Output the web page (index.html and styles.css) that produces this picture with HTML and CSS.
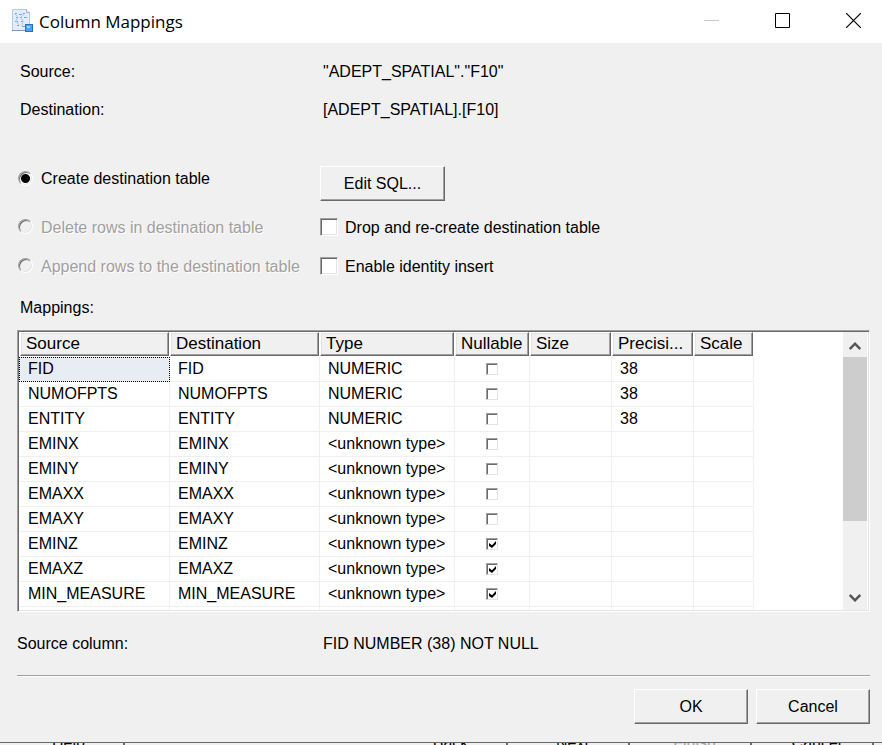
FILE: index.html
```html
<!DOCTYPE html>
<html lang="en">
<head>
<meta charset="utf-8">
<title>Column Mappings</title>
<link rel="stylesheet" href="styles.css">
</head>
<body>
<main class="dialog">
  <header class="titlebar">
    <svg class="app-icon" width="24" height="26" viewBox="0 0 24 26" aria-hidden="true">
      <path d="M2.500 1.500h14l3 3v18h-17z" fill="#e3edfa" stroke="#b4cbe9"/>
      <path d="M16.500 1.500v3h3" fill="#fff" stroke="#8fb0de"/>
      <path d="M2 22.500h17" stroke="#7f96b8"/>
      <path d="M5 5.500h2M9 6.500h3M13 5.500h2M6 9.500h2M10 9.500h2M14 9.500h3M5 13.500h3M11 13.500h2M7 17.500h2M12 18.500h3" fill="none" stroke="#7fa4dc"/>
      <path d="M5 6l3 3-2 4 3 4M14 6l-3 3 2 4-1 5" fill="none" stroke="#a9c5ec"/>
      <rect x="15.500" y="16.500" width="7" height="7" fill="#4fa3ea" stroke="#2470c2"/>
      <path d="M17 18h3v2h-3z" fill="#9ad3fa"/>
    </svg>
    <h1 class="title">Column Mappings</h1>
    <div class="window-buttons">
      <button class="window-button" aria-label="Minimize" disabled><svg width="15" height="15" viewBox="0 0 15 15"><path d="M0 7.500h15" stroke="#c8c8c8"/></svg></button>
      <button class="window-button" aria-label="Maximize"><svg width="15" height="15" viewBox="0 0 15 15"><path d="M.5.5h14v14h-14z" fill="none" stroke="#000"/></svg></button>
      <button class="window-button" aria-label="Close"><svg width="15" height="15" viewBox="0 0 15 15"><path d="M0 0l15 15M15 0L0 15" stroke="#000" stroke-width="1.200"/></svg></button>
    </div>
  </header>

  <div class="content">
    <dl class="info">
      <dt>Source:</dt><dd>"ADEPT_SPATIAL"."F10"</dd>
      <dt>Destination:</dt><dd>[ADEPT_SPATIAL].[F10]</dd>
    </dl>

    <form class="options">
      <label class="option first"><input class="radio" type="radio" name="mode" checked>Create destination table</label>
      <div><button class="button edit" type="button">Edit SQL...</button></div>
      <label class="option off"><input class="radio" type="radio" name="mode" disabled>Delete rows in destination table</label>
      <label class="option check-option"><input class="check" type="checkbox">Drop and re-create destination table</label>
      <label class="option off"><input class="radio" type="radio" name="mode" disabled>Append rows to the destination table</label>
      <label class="option check-option"><input class="check" type="checkbox">Enable identity insert</label>
    </form>

    <h2 class="caption" id="mappings">Mappings:</h2>
    <div class="grid-box">
      <div class="grid-view">
        <table class="grid" aria-labelledby="mappings">
          <colgroup><col class="c-source"><col class="c-dest"><col class="c-type"><col class="c-null"><col class="c-num"><col class="c-num"><col class="c-scale"></colgroup>
          <thead>
            <tr><th><div>Source</div></th><th><div>Destination</div></th><th><div>Type</div></th><th><div>Nullable</div></th><th><div>Size</div></th><th><div>Precisi...</div></th><th><div>Scale</div></th></tr>
          </thead>
          <tbody>
            <tr><td class="focused">FID</td><td>FID</td><td>NUMERIC</td><td><input class="tick" type="checkbox" aria-label="FID nullable"></td><td></td><td>38</td><td></td></tr>
            <tr><td>NUMOFPTS</td><td>NUMOFPTS</td><td>NUMERIC</td><td><input class="tick" type="checkbox" aria-label="NUMOFPTS nullable"></td><td></td><td>38</td><td></td></tr>
            <tr><td>ENTITY</td><td>ENTITY</td><td>NUMERIC</td><td><input class="tick" type="checkbox" aria-label="ENTITY nullable"></td><td></td><td>38</td><td></td></tr>
            <tr><td>EMINX</td><td>EMINX</td><td>&lt;unknown type&gt;</td><td><input class="tick" type="checkbox" aria-label="EMINX nullable"></td><td></td><td></td><td></td></tr>
            <tr><td>EMINY</td><td>EMINY</td><td>&lt;unknown type&gt;</td><td><input class="tick" type="checkbox" aria-label="EMINY nullable"></td><td></td><td></td><td></td></tr>
            <tr><td>EMAXX</td><td>EMAXX</td><td>&lt;unknown type&gt;</td><td><input class="tick" type="checkbox" aria-label="EMAXX nullable"></td><td></td><td></td><td></td></tr>
            <tr><td>EMAXY</td><td>EMAXY</td><td>&lt;unknown type&gt;</td><td><input class="tick" type="checkbox" aria-label="EMAXY nullable"></td><td></td><td></td><td></td></tr>
            <tr><td>EMINZ</td><td>EMINZ</td><td>&lt;unknown type&gt;</td><td><input class="tick" type="checkbox" aria-label="EMINZ nullable" checked></td><td></td><td></td><td></td></tr>
            <tr><td>EMAXZ</td><td>EMAXZ</td><td>&lt;unknown type&gt;</td><td><input class="tick" type="checkbox" aria-label="EMAXZ nullable" checked></td><td></td><td></td><td></td></tr>
            <tr><td>MIN_MEASURE</td><td>MIN_MEASURE</td><td>&lt;unknown type&gt;</td><td><input class="tick" type="checkbox" aria-label="MIN_MEASURE nullable" checked></td><td></td><td></td><td></td></tr>
            <tr><td></td><td></td><td></td><td></td><td></td><td></td><td></td></tr>
          </tbody>
        </table>
      </div>
      <div class="scrollbar">
        <button class="scroll-button" aria-label="Scroll up"><svg width="12" height="10" viewBox="0 0 12 10"><path d="M.7 8L6 2.700 11.300 8" fill="none" stroke="#555" stroke-width="2.500"/></svg></button>
        <div class="track"><div class="thumb"></div></div>
        <button class="scroll-button" aria-label="Scroll down"><svg width="12" height="10" viewBox="0 0 12 10"><path d="M.7 1L6 6.300 11.300 1" fill="none" stroke="#555" stroke-width="2.500"/></svg></button>
      </div>
    </div>

    <div class="source-column"><span>Source column:</span><span>FID NUMBER (38) NOT NULL</span></div>
    <hr class="divider">
    <div class="actions"><button class="button">OK</button><button class="button">Cancel</button></div>
  </div>
</main>

<footer class="wizard">
  <button class="wizard-button help">Help</button>
  <button class="wizard-button">Back</button>
  <button class="wizard-button">Next</button>
  <button class="wizard-button" disabled>Finish</button>
  <button class="wizard-button">Cancel</button>
</footer>
</body>
</html>
```

FILE: styles.css
```css
* { box-sizing: border-box; }

body {
  margin: 0;
  height: 100vh;
  display: flex;
  flex-direction: column;
  overflow: hidden;
  background: #f0f0f0;
  color: #000;
  font: 16px/24px "Liberation Sans", Arial, sans-serif;
}

button, input { font: inherit; color: inherit; margin: 0; }

.dialog {
  flex: 1;
  min-height: 0;
  display: flex;
  flex-direction: column;
  border-bottom: 1px solid #696969;
}

/* Title bar */
.titlebar {
  display: flex;
  align-items: center;
  height: 43px;
  padding-left: 10px;
  background: #fff;
}
.app-icon { margin-bottom: 2px; }
.title {
  flex: 1;
  margin: 0 0 0 5px;
  font: 17px/24px "Open Sans", "Noto Sans", sans-serif;
}
.window-buttons {
  display: flex;
  align-self: flex-start;
  margin-right: -7px;
}
.window-button {
  display: flex;
  align-items: center;
  justify-content: center;
  width: 71px;
  height: 41px;
  padding: 0;
  border: 0;
  background: none;
}

/* Dialog content */
.content {
  flex: 1;
  min-height: 0;
  display: flex;
  flex-direction: column;
  padding: 10px 12px 18px 17px;
}
.info {
  display: grid;
  grid-template-columns: 303px 1fr;
  margin: 0 0 37px;
  padding-left: 3px;
  line-height: 38px;
}
.info dd { margin: 0; }

.options {
  display: grid;
  grid-template-columns: 302px 1fr;
  grid-template-rows: 42px 39px 39px;
  padding-left: 1px;
}
.option { display: flex; align-items: center; gap: 8px; }
.option.first { align-self: start; line-height: 26px; }
.check-option { gap: 7px; }
.off { color: #a0a0a0; text-shadow: 1px 1px #fff; }

.radio {
  appearance: none;
  width: 15px;
  height: 15px;
  margin-bottom: 2px;
  border: 1px solid;
  border-color: #a0a0a0 #fff #fff #a0a0a0;
  border-radius: 50%;
  background: #f0f0f0;
  box-shadow: inset 1px 1px #696969, inset -1px -1px #e3e3e3;
}
.radio:checked { background: radial-gradient(circle, #000 4px, #fff 5px); }

.check {
  appearance: none;
  width: 18px;
  height: 18px;
  margin-bottom: 2px;
  border: 1px solid;
  border-color: #a0a0a0 #fff #fff #a0a0a0;
  background: #fff;
  box-shadow: inset 1px 1px #696969, inset -1px -1px #e3e3e3;
}

.button {
  width: 114px;
  height: 35px;
  padding: 0;
  border: 1px solid;
  border-color: #fff #696969 #696969 #fff;
  background: #f0f0f0;
  box-shadow: inset -1px -1px #a0a0a0;
}
.edit { width: 125px; }

.caption {
  margin: 0;
  padding: 0 3px;
  font: inherit;
  line-height: 44px;
}

/* Mappings grid */
.grid-box {
  flex: 1;
  min-height: 0;
  display: flex;
  padding: 1px 2px 1px 1px;
  border: 1px solid;
  border-color: #a0a0a0 #fff #fff #a0a0a0;
  background: #fff;
  box-shadow: inset 1px 1px #696969, inset -1px -1px #e3e3e3;
}
.grid-view { flex: 1; overflow: hidden; }
.grid {
  table-layout: fixed;
  width: 735px;
  border-collapse: separate;
  border-spacing: 0;
}
.c-source { width: 151px; }
.c-dest { width: 150px; }
.c-type { width: 135px; }
.c-null { width: 75px; }
.c-num { width: 82px; }
.c-scale { width: 60px; }

.grid th {
  height: 25px;
  padding: 0 1px 1px 0;
  font-size: 17px;
  font-weight: normal;
  text-align: left;
}
.grid th:first-child { padding-left: 1px; }
.grid th div {
  height: 24px;
  padding-left: 5px;
  line-height: 22px;
  overflow: hidden;
  white-space: nowrap;
  border: 1px solid;
  border-color: #fff #696969 #696969 #fff;
  background: #f0f0f0;
  box-shadow: inset -1px -1px #a0a0a0, inset 1px 1px #e3e3e3;
}
.grid td {
  height: 25px;
  padding: 0 0 0 8px;
  line-height: 24px;
  white-space: nowrap;
  border: solid #f0f0f0;
  border-width: 0 1px 1px 0;
}
.grid td:first-child { padding-left: 9px; }
.grid .focused {
  background: #e8edf3;
  outline: 1px dotted #000;
  outline-offset: -1px;
}
.grid td:nth-child(4) { padding: 0; text-align: center; }

.tick {
  appearance: none;
  display: block;
  width: 12px;
  height: 12px;
  margin: 0 auto;
  border: 1px solid;
  border-color: #a0a0a0 #e3e3e3 #e3e3e3 #a0a0a0;
  background: #fff;
  box-shadow: inset 1px 1px #696969;
}
.tick:checked::before {
  content: "";
  display: block;
  width: 7px;
  height: 7px;
  margin: 2px;
  background: #000;
  clip-path: polygon(0 29%, 43% 62%, 100% 0, 100% 43%, 43% 100%, 0 71%);
}

.scrollbar {
  display: flex;
  flex-direction: column;
  width: 24px;
  background: #f0f0f0;
}
.scroll-button {
  display: flex;
  align-items: center;
  justify-content: center;
  height: 25px;
  padding: 2px 0 0;
  border: 0;
  background: none;
}
.track { flex: 1; }
.thumb { height: 72%; background: #cdcdcd; }

.source-column {
  display: grid;
  grid-template-columns: 306px 1fr;
  line-height: 63px;
}
.divider {
  width: 100%;
  margin: 0 0 12px;
  border: 0;
  border-top: 1px solid #a0a0a0;
  border-bottom: 1px solid #fff;
}
.actions { display: flex; justify-content: flex-end; gap: 8px; }

/* Top edge of the wizard's button row behind the dialog */
.wizard {
  display: flex;
  align-items: flex-end;
  gap: 9px;
  height: 2px;
  padding: 0 8px 0 14px;
  overflow: hidden;
}
.wizard-button {
  width: 113px;
  height: 24px;
  padding: 14px 0 0;
  line-height: 16px;
  border: solid #696969;
  border-width: 0 2px 0 0;
  background: #f0f0f0;
}
.wizard-button:disabled { color: #a0a0a0; }
.help { width: 111px; margin-right: auto; }
```
